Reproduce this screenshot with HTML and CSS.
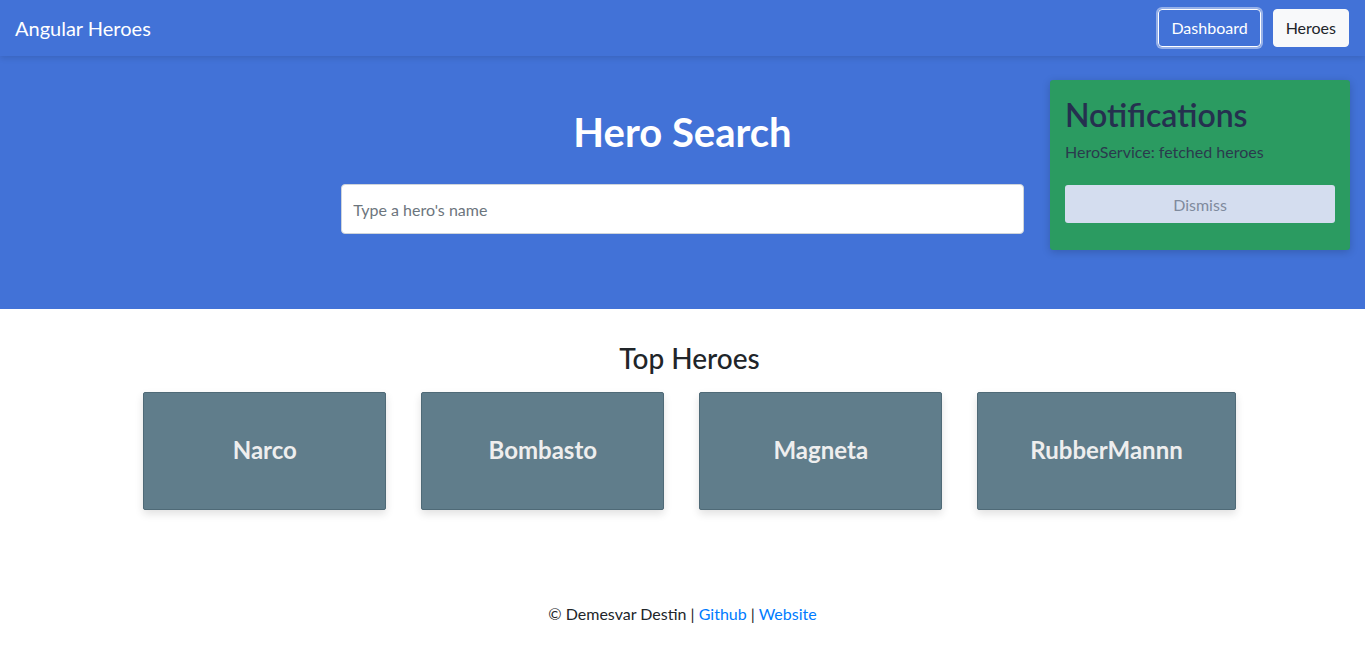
FILE: index.html
```html
<!DOCTYPE html>
<html lang="en">
<head>
<meta charset="utf-8">
<title>Angular Heroes</title>
<link rel="stylesheet" href="styles.css">
</head>
<body>
<nav class="navbar">
  <a class="brand" href="#">Angular Heroes</a>
  <div class="nav-buttons">
    <button class="btn btn-outline">Dashboard</button>
    <button class="btn btn-light">Heroes</button>
  </div>
</nav>
<header class="hero">
  <h1 class="hero-title">Hero Search</h1>
  <div class="search-wrap">
    <input class="search-input" type="text" placeholder="Type a hero's name">
  </div>
  <aside class="notifications">
    <h2 class="notif-title">Notifications</h2>
    <p class="notif-msg">HeroService: fetched heroes</p>
    <button class="btn-dismiss">Dismiss</button>
  </aside>
</header>
<main class="dashboard">
  <h2 class="section-title">Top Heroes</h2>
  <div class="hero-grid">
    <a class="hero-card" href="#">Narco</a>
    <a class="hero-card" href="#">Bombasto</a>
    <a class="hero-card" href="#">Magneta</a>
    <a class="hero-card" href="#">RubberMannn</a>
  </div>
</main>
<footer class="footer">
  © Demesvar Destin | <a href="#">Github</a> | <a href="#">Website</a>
</footer>
</body>
</html>
```
FILE: styles.css
```css
* { box-sizing: border-box; }
html, body {
  margin: 0;
  padding: 0;
}
body {
  font-family: Lato, "Noto Sans", Arial, sans-serif;
  font-size: 16px;
  line-height: 1.5;
  color: #212529;
  background: #fff;
}
.navbar {
  position: relative;
  z-index: 2;
  height: 56px;
  padding: 0 16px 0 15px;
  display: flex;
  align-items: center;
  justify-content: space-between;
  background: #4272d7;
  box-shadow: 0 2px 6px rgba(0, 0, 0, 0.12);
}
.brand {
  color: #fff;
  font-size: 20px;
  text-decoration: none;
  line-height: 1.5;
}
.nav-buttons {
  display: flex;
  gap: 12px;
}
.btn {
  font-family: inherit;
  font-size: 16px;
  line-height: 24px;
  padding: 6px 12px;
  height: 38px;
  border-radius: 4px;
  border: 1px solid transparent;
  cursor: pointer;
}
.btn-outline {
  background: transparent;
  color: #fff;
  border-color: #fff;
  box-shadow: 0 0 0 2px rgba(255, 255, 255, 0.45);
}
.btn-light {
  background: #f8f9fa;
  color: #212529;
  border-color: #f8f9fa;
}
.hero {
  position: relative;
  background: #4272d7;
  height: 253px;
  padding-top: 52px;
}
.hero-title {
  margin: 0 0 28px;
  text-align: center;
  color: #fff;
  font-size: 40px;
  font-weight: 700;
  line-height: 48px;
}
.search-wrap {
  width: 50%;
  margin: 0 auto;
}
.search-input {
  display: block;
  width: 100%;
  height: 50px;
  padding: 0 11px;
  font-family: inherit;
  font-size: 16px;
  color: #495057;
  background: #fff;
  border: 1px solid #ced4da;
  border-radius: 4px;
  outline: none;
}
.search-input::placeholder { color: #6c757d; }
.notifications {
  position: absolute;
  top: 24px;
  right: 15px;
  width: 300px;
  height: 170px;
  padding: 15px;
  background: #2b9b61;
  border-radius: 3px;
  box-shadow: 0 2px 8px rgba(0, 0, 0, 0.18);
}
.notif-title {
  margin: 0 0 5px;
  font-size: 32px;
  font-weight: 600;
  line-height: 40px;
  color: #25304f;
}
.notif-msg {
  margin: 0 0 21px;
  font-size: 16px;
  line-height: 24px;
  color: #2a3a4d;
}
.btn-dismiss {
  display: block;
  width: 100%;
  height: 38px;
  font-family: inherit;
  font-size: 16px;
  color: #7f8a9d;
  background: #d4ddef;
  border: none;
  border-radius: 3px;
  cursor: pointer;
}
.dashboard {
  padding: 32px 0 0 14px;
  text-align: center;
}
.section-title {
  margin: 0 0 17px;
  font-size: 28px;
  font-weight: 500;
  line-height: 34px;
  color: #212529;
}
.hero-grid {
  display: flex;
  justify-content: center;
  gap: 35px;
}
.hero-card {
  display: flex;
  align-items: center;
  justify-content: center;
  min-width: 243px;
  height: 118px;
  padding: 0 52px 3px;
  background: #607d8b;
  border: 1px solid #4f6a77;
  border-radius: 2px;
  box-shadow: 0 4px 8px rgba(0, 0, 0, 0.12);
  color: #eee;
  font-size: 24px;
  font-weight: 700;
  text-decoration: none;
}
.footer {
  margin-top: 92px;
  text-align: center;
  line-height: 24px;
  color: #212529;
}
.footer a {
  color: #007bff;
  text-decoration: none;
}
```
